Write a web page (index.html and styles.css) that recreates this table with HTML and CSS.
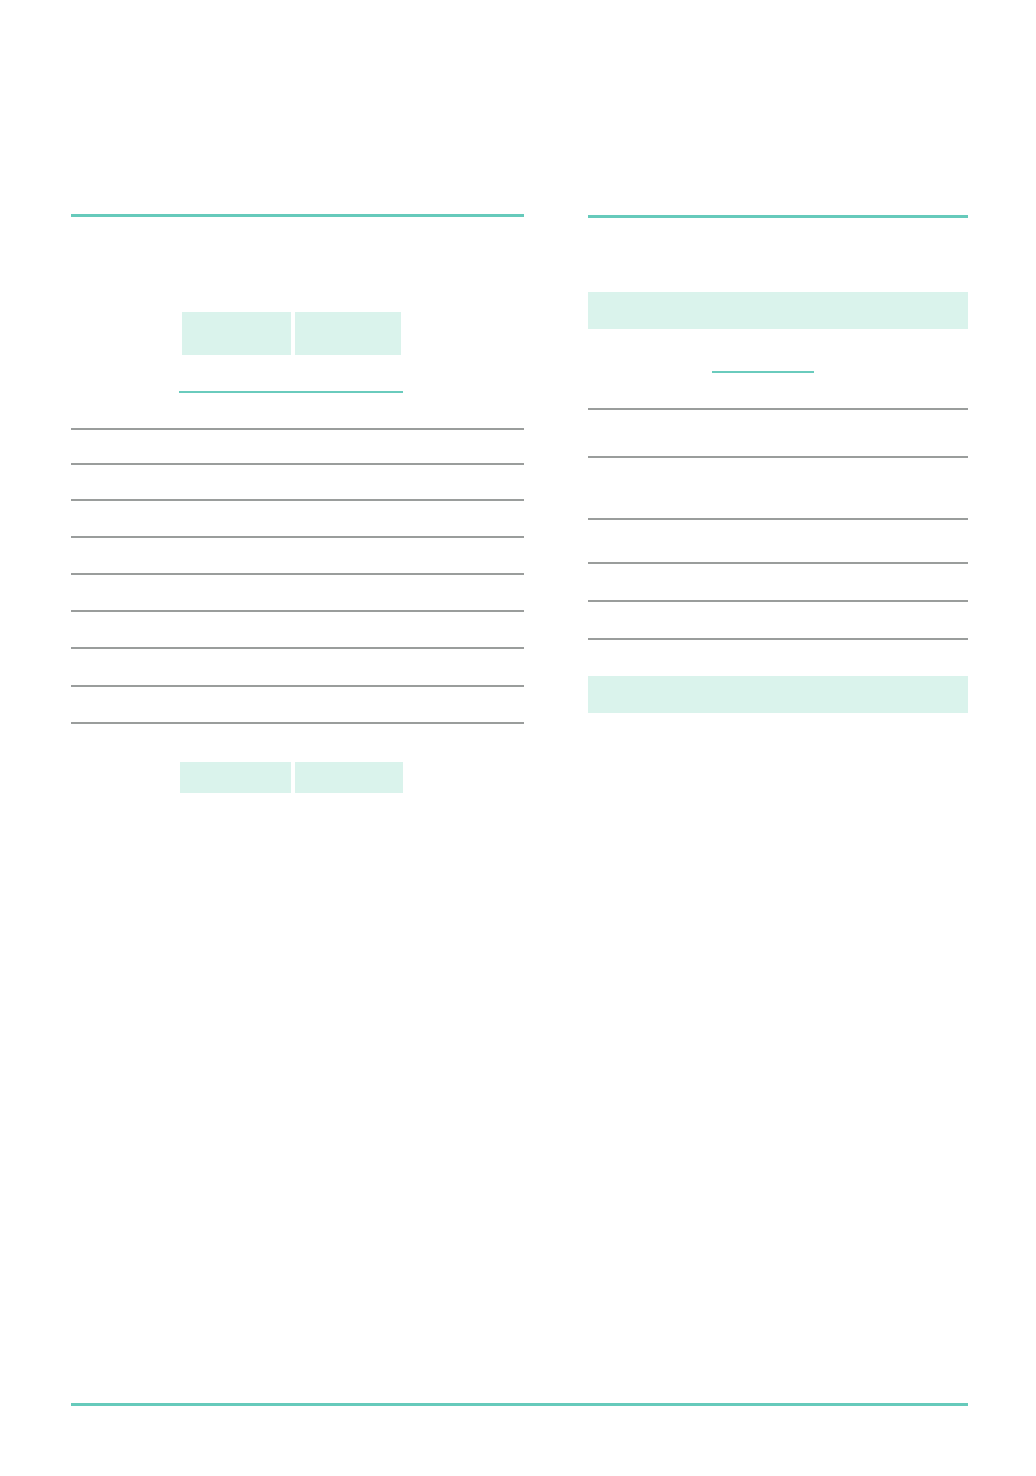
FILE: index.html
```html
<!DOCTYPE html>
<html lang="en">
<head>
<meta charset="utf-8">
<title>Document page</title>
<link rel="stylesheet" href="styles.css">
</head>
<body>
<div class="page">
  <div class="columns">
    <section class="left">
      <div class="rule-teal"></div>
      <div class="legend-top">
        <div class="cell-a"></div>
        <div class="cell-b"></div>
      </div>
      <div class="underline-left"></div>
      <div class="rows-left">
        <div class="row r1"></div>
        <div class="row r2"></div>
        <div class="row r3"></div>
        <div class="row r4"></div>
        <div class="row r4"></div>
        <div class="row r4"></div>
        <div class="row r4"></div>
        <div class="row r5"></div>
        <div class="row r4"></div>
      </div>
      <div class="legend-bottom">
        <div class="cell-c"></div>
        <div class="cell-d"></div>
      </div>
    </section>
    <section class="right">
      <div class="rule-teal"></div>
      <div class="band band-top"></div>
      <div class="underline-right"></div>
      <div class="rows-right">
        <div class="row s1"></div>
        <div class="row s2"></div>
        <div class="row s3"></div>
        <div class="row s4"></div>
        <div class="row s5"></div>
        <div class="row s6"></div>
      </div>
      <div class="band band-bottom"></div>
    </section>
  </div>
  <div class="footer-rule"></div>
</div>
</body>
</html>
```
FILE: styles.css
```css
html, body {
  margin: 0;
  padding: 0;
  background: #ffffff;
  font-family: "Liberation Sans", Arial, sans-serif;
}

.page {
  width: 897px;
  padding: 214px 0 0 71px;
}

.columns {
  display: flex;
  align-items: flex-start;
  gap: 64px;
  height: 1189px;
}

.left {
  width: 453px;
}

.right {
  width: 380px;
  padding-top: 1px;
}

.rule-teal {
  height: 3px;
  background: #66cabb;
}

.legend-top {
  display: flex;
  gap: 4px;
  margin: 95px 0 0 111px;
}

.cell-a,
.cell-b,
.cell-c,
.cell-d {
  background: #daf3ec;
}

.cell-a {
  width: 109px;
  height: 43px;
}

.cell-b {
  width: 106px;
  height: 43px;
}

.underline-left {
  margin: 36px 0 0 108px;
  width: 224px;
  height: 2px;
  background: #6acbbd;
}

.row {
  border-bottom: 2px solid #9a9d9c;
}

.r1 { height: 35px; }
.r2 { height: 33px; }
.r3 { height: 34px; }
.r4 { height: 35px; }
.r5 { height: 36px; }

.legend-bottom {
  display: flex;
  gap: 4px;
  margin: 38px 0 0 109px;
}

.cell-c {
  width: 111px;
  height: 31px;
}

.cell-d {
  width: 108px;
  height: 31px;
}

.band {
  background: #daf3ec;
  height: 37px;
}

.band-top {
  margin-top: 74px;
}

.underline-right {
  margin: 42px 0 0 124px;
  width: 102px;
  height: 2px;
  background: #6acbbd;
}

.s1 { height: 35px; }
.s2 { height: 46px; }
.s3 { height: 60px; }
.s4 { height: 42px; }
.s5 { height: 36px; }
.s6 { height: 36px; }

.band-bottom {
  margin-top: 36px;
}

.footer-rule {
  height: 3px;
  background: #66cabb;
}
```
